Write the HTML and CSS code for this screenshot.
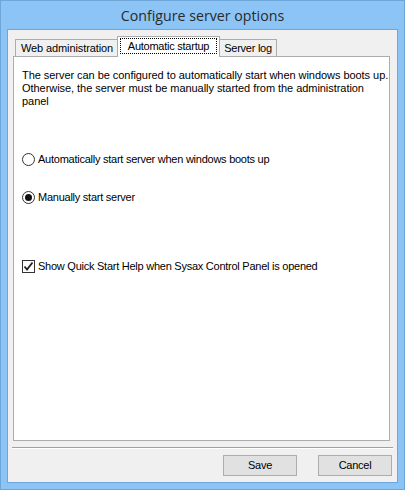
FILE: index.html
```html
<!DOCTYPE html>
<html lang="en">
<head>
    <meta charset="UTF-8">
    <title>Configure server options</title>
    <link rel="stylesheet" href="styles.css">
</head>
<body>

    <div class="window">
        <div class="titlebar">Configure server options</div>

        <div class="client">
            <div class="tabs">
                <div class="tab tab-web">Web administration</div>
                <div class="tab tab-active"><span class="focus">Automatic startup</span></div>
                <div class="tab tab-log">Server log</div>
            </div>

            <div class="panel">
                <p class="intro">The server can be configured to automatically start when windows boots up.<br>Otherwise, the server must be manually started from the administration<br>panel</p>

                <label class="option option-first">
                    <span class="radio"></span>
                    Automatically start server when windows boots up
                </label>

                <label class="option option-second">
                    <span class="radio checked"></span>
                    Manually start server
                </label>

                <label class="option option-check">
                    <span class="checkbox">
                        <svg width="11" height="11" viewBox="0 0 11 11">
                            <path d="M1.5 5.5 L4 8.5 L9.5 1.5" fill="none" stroke="#222" stroke-width="1.8"/>
                        </svg>
                    </span>
                    Show Quick Start Help when Sysax Control Panel is opened
                </label>
            </div>

            <div class="separator"></div>

            <div class="buttons">
                <div class="button">Save</div>
                <div class="button">Cancel</div>
            </div>
        </div>
    </div>

</body>
</html>
```

FILE: styles.css
```css
body {
    margin: 0;
    padding: 0;
    font-family: 'Liberation Sans', Arial, sans-serif;
    font-size: 11px;
    letter-spacing: -0.25px;
    color: #000;
}
.window {
    width: 405px;
    height: 490px;
    box-sizing: border-box;
    background-color: #8cc4f6;
    border: 1px solid #6fa6d9;
    padding: 0 6px 6px 6px;
    display: flex;
    flex-direction: column;
}
.titlebar {
    height: 28px;
    text-align: center;
    font-family: 'Open Sans', 'Noto Sans', sans-serif;
    font-size: 14.2px;
    letter-spacing: 0;
    line-height: 29px;
    color: #2a2a2a;
}
.client {
    flex: 1;
    background-color: #f0f0f0;
    border: 1px solid #6fa6d9;
    display: flex;
    flex-direction: column;
}
.tabs {
    display: flex;
    align-items: flex-end;
    height: 26px;
    padding-left: 7px;
}
.tab {
    box-sizing: border-box;
    height: 17px;
    border: 1px solid #acacac;
    border-bottom: none;
    background-color: #f0f0f0;
    line-height: 16px;
    padding: 0;
    white-space: nowrap;
    text-align: center;
}
.tab-web {
    width: 104px;
    margin-right: -2px;
    letter-spacing: -0.1px;
}
.tab-active {
    position: relative;
    height: 21px;
    width: 103px;
    background-color: #fff;
    margin-bottom: -1px;
    padding: 1px 2px 0;
    z-index: 1;
}
.focus {
    display: block;
    border: 1px dotted #000;
    line-height: 14px;
}
.tab-log {
    width: 58px;
    margin-left: -1px;
}
.panel {
    box-sizing: border-box;
    height: 385px;
    width: 377px;
    margin-left: 5px;
    background-color: #fff;
    border: 1px solid #acacac;
    padding: 12px 0 0 8px;
    white-space: nowrap;
}
.intro {
    margin: 0;
    line-height: 13px;
    letter-spacing: -0.05px;
}
.option {
    display: flex;
    align-items: center;
    gap: 3px;
    height: 14px;
}
.option-first {
    margin-top: 44px;
}
.option-second {
    margin-top: 24px;
}
.option-check {
    margin-top: 55px;
}
.radio {
    box-sizing: border-box;
    width: 13px;
    height: 13px;
    border: 1px solid #333;
    border-radius: 50%;
    background: #fff;
    display: flex;
    align-items: center;
    justify-content: center;
}
.radio.checked::after {
    content: "";
    width: 7px;
    height: 7px;
    border-radius: 50%;
    background: #111;
}
.checkbox {
    box-sizing: border-box;
    width: 13px;
    height: 13px;
    border: 1px solid #333;
    background: #fff;
    display: flex;
    align-items: center;
    justify-content: center;
}
.separator {
    height: 1px;
    margin: 6px 4px 0 4px;
    background-color: #a0a0a0;
    border-bottom: 1px solid #fff;
}
.buttons {
    display: flex;
    justify-content: flex-end;
    gap: 21px;
    padding: 6px 5px 0 0;
}
.button {
    box-sizing: border-box;
    width: 74px;
    height: 21px;
    border: 1px solid #adadad;
    background-color: #e1e1e1;
    text-align: center;
    line-height: 19px;
}
```
